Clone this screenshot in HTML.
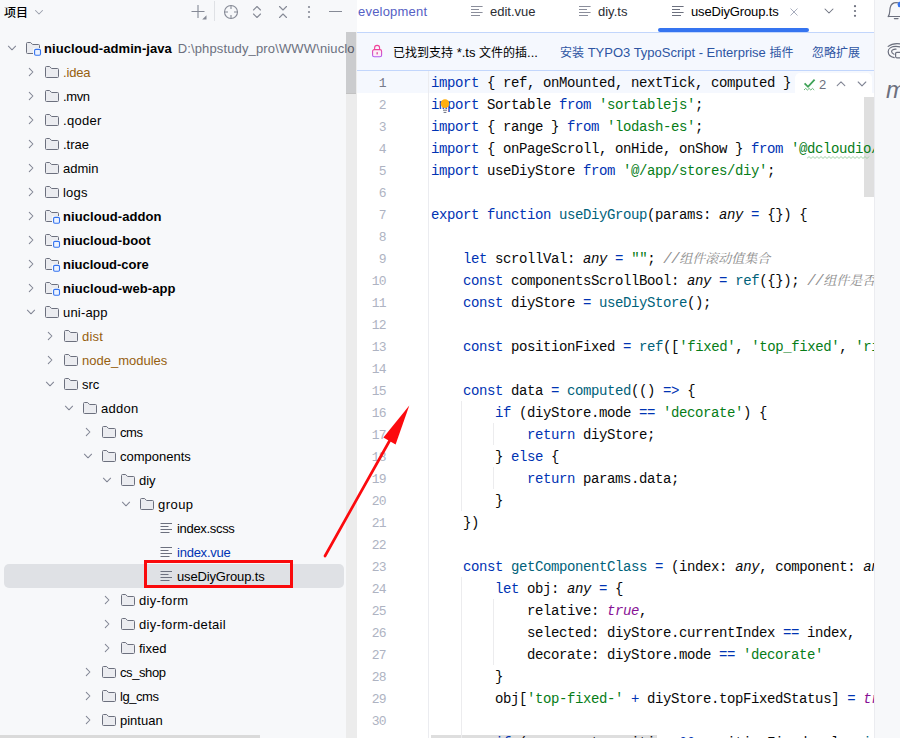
<!DOCTYPE html>
<html lang="zh">
<head>
<meta charset="utf-8">
<title>useDiyGroup.ts</title>
<style>
html,body{margin:0;padding:0;}
body{width:900px;height:738px;overflow:hidden;position:relative;background:#fff;font-family:"Liberation Sans","Noto Sans CJK SC",sans-serif;font-size:13px;color:#000;}
#left{position:absolute;left:0;top:0;width:357px;height:738px;background:#f7f8fa;overflow:hidden;}
#left .ic{position:absolute;}
#left .t{position:absolute;height:24px;line-height:24px;white-space:nowrap;font-size:13px;color:#000;}
#left .t.b{font-weight:bold;letter-spacing:0.08px;}
#left .t.ex{color:#96600f;}
#left .t.bl{color:#0033b3;}
#left .path{font-weight:normal;color:#6c707e;margin-left:2px;letter-spacing:0.14px;}
#sel{position:absolute;left:4px;top:564px;width:340px;height:24px;border-radius:5px;background:#dfe1e5;}
#vsb{position:absolute;left:346px;top:93px;width:11px;height:645px;background:#ececec;}
#vsb i{position:absolute;left:0;top:-61px;width:10px;height:61.6px;background:rgba(0,0,0,0.175);display:block;}
#vsb b{position:absolute;left:10px;top:-61px;width:1px;height:61px;background:#ececec;display:block;}
#hsb{position:absolute;left:0;top:735px;width:346px;height:3px;background:transparent;}
#hsb i{position:absolute;left:0;top:0;width:260px;height:3px;background:#dadada;display:block;}
#redbox{position:absolute;left:144px;top:560px;width:143px;height:22px;border:3px solid #fa0a0c;}
#editor{position:absolute;left:357px;top:0;width:518px;height:738px;background:#fff;overflow:hidden;}
#right{position:absolute;left:874px;top:0;width:26px;height:738px;background:#f7f8fa;border-left:1px solid #ebecf0;box-sizing:border-box;overflow:hidden;}
.abs{position:absolute;}
#banner{position:absolute;left:0;top:32px;width:518px;height:38px;background:#f5f8fe;border-top:1px solid #c2d6fc;border-bottom:1px solid #c2d6fc;box-sizing:content-box;height:37px;}
#code{position:absolute;left:0;top:0;width:518px;height:738px;overflow:hidden;font-family:"Liberation Mono","Noto Sans CJK SC",monospace;font-size:14px;letter-spacing:-0.4px;}
.cl{position:absolute;left:74px;margin-top:1px;height:22px;line-height:22px;white-space:pre;color:#080808;}
.ln{position:absolute;left:0;width:28.6px;text-align:right;height:22px;line-height:22px;color:#aeb3c2;font-size:13px;letter-spacing:-0.9px;margin-top:2px;}
.ln.cur{color:#767a8a;}
.k{color:#0033b3;}
.s{color:#067d17;}
.f{color:#00627a;}
.o{color:#0033b3;}
.c{color:#8c8c8c;font-style:italic;}
.cc{color:#8c8c8c;font-style:italic;font-family:"Liberation Serif","Noto Serif CJK SC",serif;font-size:13px;letter-spacing:0;}
.i{font-style:italic;}
.p{color:#871094;font-style:italic;}
.cj{font-size:12px;}
.tab{position:absolute;top:0px;height:24px;line-height:24px;font-size:13px;white-space:nowrap;}
</style>
</head>
<body>
<div id="left">
  <div class="abs" style="left:4px;top:1px;height:24px;line-height:24px;font-size:12px;font-weight:500;">项目</div>
  <svg class="abs" style="left:31px;top:4px" width="16" height="16" viewBox="0 0 16 16"><path d="M4.5 6.5 L8 10 L11.5 6.5" fill="none" stroke="#9a9eaa" stroke-width="1.05" stroke-linecap="round" stroke-linejoin="round"/></svg>
  <!-- toolbar icons -->
  <svg class="abs" style="left:188px;top:2px" width="22" height="20" viewBox="0 0 22 20"><path d="M10 3 V16 M3.5 9.5 H16.5" fill="none" stroke="#868a96" stroke-width="1.1"/><path d="M18.5 13.2 V17.5 H14.2 Z" fill="#868a96"/></svg>
  <div class="abs" style="left:214px;top:1px;width:1px;height:20px;background:#dfe1e5"></div>
  <svg class="abs" style="left:223px;top:4px" width="16" height="16" viewBox="0 0 16 16"><circle cx="8" cy="8" r="6.5" fill="none" stroke="#868a96" stroke-width="1.1"/><path d="M8 1.5 V5 M8 11 V14.5 M1.5 8 H5 M11 8 H14.5" stroke="#868a96" stroke-width="1.1" fill="none"/></svg>
  <svg class="abs" style="left:249px;top:4px" width="16" height="16" viewBox="0 0 16 16"><path d="M4.5 6 L8 2.5 L11.5 6 M4.5 10 L8 13.5 L11.5 10" fill="none" stroke="#868a96" stroke-width="1.1" stroke-linecap="round" stroke-linejoin="round"/></svg>
  <svg class="abs" style="left:275px;top:4px" width="16" height="16" viewBox="0 0 16 16"><path d="M4.5 2.5 L8 6 L11.5 2.5 M4.5 13.5 L8 10 L11.5 13.5" fill="none" stroke="#868a96" stroke-width="1.1" stroke-linecap="round" stroke-linejoin="round"/></svg>
  <svg class="abs" style="left:301px;top:4px" width="16" height="16" viewBox="0 0 16 16"><circle cx="8" cy="3" r="1.1" fill="#868a96"/><circle cx="8" cy="8" r="1.1" fill="#868a96"/><circle cx="8" cy="13" r="1.1" fill="#868a96"/></svg>
  <div class="abs" style="left:329px;top:11px;width:13px;height:1px;background:#868a96"></div>
  <div id="sel"></div>
<svg class="ic" style="left:4px;top:40px" width="16" height="16" viewBox="0 0 16 16"><path d="M4.4 6.2 L8 9.8 L11.6 6.2" fill="none" stroke="#818594" stroke-width="1.05" stroke-linecap="round" stroke-linejoin="round"/></svg>
<svg class="ic" style="left:25px;top:40px;overflow:visible" width="16" height="16" viewBox="0 0 16 16"><path d="M1.5 3.5 a1 1 0 0 1 1-1 H5.6 L7.6 4.5 H13.5 a1 1 0 0 1 1 1 V12.5 a1 1 0 0 1-1 1 H2.5 a1 1 0 0 1-1-1 Z" fill="#ebecf0" stroke="#6c707e" stroke-width="1"/><rect x="8" y="8" width="9" height="9" fill="#f7f8fa"/><rect x="9.6" y="9.4" width="5.9" height="5.9" rx="1.2" fill="#edf3ff" stroke="#3574f0" stroke-width="1.1"/></svg>
<div class="t b" style="left:44px;top:37px">niucloud-admin-java<span class="path"> D:\phpstudy_pro\WWW\niuclo</span></div>
<svg class="ic" style="left:23px;top:64px" width="16" height="16" viewBox="0 0 16 16"><path d="M6.3 4.4 L9.9 8 L6.3 11.6" fill="none" stroke="#818594" stroke-width="1.05" stroke-linecap="round" stroke-linejoin="round"/></svg>
<svg class="ic" style="left:44px;top:64px" width="16" height="16" viewBox="0 0 16 16"><path d="M1.5 3.5 a1 1 0 0 1 1-1 H5.6 L7.6 4.5 H13.5 a1 1 0 0 1 1 1 V12.5 a1 1 0 0 1-1 1 H2.5 a1 1 0 0 1-1-1 Z" fill="#ebecf0" stroke="#6c707e" stroke-width="1"/></svg>
<div class="t ex" style="left:63px;top:61px;letter-spacing:-0.18px">.idea</div>
<svg class="ic" style="left:23px;top:88px" width="16" height="16" viewBox="0 0 16 16"><path d="M6.3 4.4 L9.9 8 L6.3 11.6" fill="none" stroke="#818594" stroke-width="1.05" stroke-linecap="round" stroke-linejoin="round"/></svg>
<svg class="ic" style="left:44px;top:88px" width="16" height="16" viewBox="0 0 16 16"><path d="M1.5 3.5 a1 1 0 0 1 1-1 H5.6 L7.6 4.5 H13.5 a1 1 0 0 1 1 1 V12.5 a1 1 0 0 1-1 1 H2.5 a1 1 0 0 1-1-1 Z" fill="#ebecf0" stroke="#6c707e" stroke-width="1"/></svg>
<div class="t" style="left:63px;top:85px;letter-spacing:-0.37px">.mvn</div>
<svg class="ic" style="left:23px;top:112px" width="16" height="16" viewBox="0 0 16 16"><path d="M6.3 4.4 L9.9 8 L6.3 11.6" fill="none" stroke="#818594" stroke-width="1.05" stroke-linecap="round" stroke-linejoin="round"/></svg>
<svg class="ic" style="left:44px;top:112px" width="16" height="16" viewBox="0 0 16 16"><path d="M1.5 3.5 a1 1 0 0 1 1-1 H5.6 L7.6 4.5 H13.5 a1 1 0 0 1 1 1 V12.5 a1 1 0 0 1-1 1 H2.5 a1 1 0 0 1-1-1 Z" fill="#ebecf0" stroke="#6c707e" stroke-width="1"/></svg>
<div class="t" style="left:63px;top:109px;letter-spacing:0.30px">.qoder</div>
<svg class="ic" style="left:23px;top:136px" width="16" height="16" viewBox="0 0 16 16"><path d="M6.3 4.4 L9.9 8 L6.3 11.6" fill="none" stroke="#818594" stroke-width="1.05" stroke-linecap="round" stroke-linejoin="round"/></svg>
<svg class="ic" style="left:44px;top:136px" width="16" height="16" viewBox="0 0 16 16"><path d="M1.5 3.5 a1 1 0 0 1 1-1 H5.6 L7.6 4.5 H13.5 a1 1 0 0 1 1 1 V12.5 a1 1 0 0 1-1 1 H2.5 a1 1 0 0 1-1-1 Z" fill="#ebecf0" stroke="#6c707e" stroke-width="1"/></svg>
<div class="t" style="left:63px;top:133px">.trae</div>
<svg class="ic" style="left:23px;top:160px" width="16" height="16" viewBox="0 0 16 16"><path d="M6.3 4.4 L9.9 8 L6.3 11.6" fill="none" stroke="#818594" stroke-width="1.05" stroke-linecap="round" stroke-linejoin="round"/></svg>
<svg class="ic" style="left:44px;top:160px" width="16" height="16" viewBox="0 0 16 16"><path d="M1.5 3.5 a1 1 0 0 1 1-1 H5.6 L7.6 4.5 H13.5 a1 1 0 0 1 1 1 V12.5 a1 1 0 0 1-1 1 H2.5 a1 1 0 0 1-1-1 Z" fill="#ebecf0" stroke="#6c707e" stroke-width="1"/></svg>
<div class="t" style="left:63px;top:157px">admin</div>
<svg class="ic" style="left:23px;top:184px" width="16" height="16" viewBox="0 0 16 16"><path d="M6.3 4.4 L9.9 8 L6.3 11.6" fill="none" stroke="#818594" stroke-width="1.05" stroke-linecap="round" stroke-linejoin="round"/></svg>
<svg class="ic" style="left:44px;top:184px" width="16" height="16" viewBox="0 0 16 16"><path d="M1.5 3.5 a1 1 0 0 1 1-1 H5.6 L7.6 4.5 H13.5 a1 1 0 0 1 1 1 V12.5 a1 1 0 0 1-1 1 H2.5 a1 1 0 0 1-1-1 Z" fill="#ebecf0" stroke="#6c707e" stroke-width="1"/></svg>
<div class="t" style="left:63px;top:181px;letter-spacing:0.20px">logs</div>
<svg class="ic" style="left:23px;top:208px" width="16" height="16" viewBox="0 0 16 16"><path d="M6.3 4.4 L9.9 8 L6.3 11.6" fill="none" stroke="#818594" stroke-width="1.05" stroke-linecap="round" stroke-linejoin="round"/></svg>
<svg class="ic" style="left:44px;top:208px;overflow:visible" width="16" height="16" viewBox="0 0 16 16"><path d="M1.5 3.5 a1 1 0 0 1 1-1 H5.6 L7.6 4.5 H13.5 a1 1 0 0 1 1 1 V12.5 a1 1 0 0 1-1 1 H2.5 a1 1 0 0 1-1-1 Z" fill="#ebecf0" stroke="#6c707e" stroke-width="1"/><rect x="8" y="8" width="9" height="9" fill="#f7f8fa"/><rect x="9.6" y="9.4" width="5.9" height="5.9" rx="1.2" fill="#edf3ff" stroke="#3574f0" stroke-width="1.1"/></svg>
<div class="t b" style="left:63px;top:205px">niucloud-addon</div>
<svg class="ic" style="left:23px;top:232px" width="16" height="16" viewBox="0 0 16 16"><path d="M6.3 4.4 L9.9 8 L6.3 11.6" fill="none" stroke="#818594" stroke-width="1.05" stroke-linecap="round" stroke-linejoin="round"/></svg>
<svg class="ic" style="left:44px;top:232px;overflow:visible" width="16" height="16" viewBox="0 0 16 16"><path d="M1.5 3.5 a1 1 0 0 1 1-1 H5.6 L7.6 4.5 H13.5 a1 1 0 0 1 1 1 V12.5 a1 1 0 0 1-1 1 H2.5 a1 1 0 0 1-1-1 Z" fill="#ebecf0" stroke="#6c707e" stroke-width="1"/><rect x="8" y="8" width="9" height="9" fill="#f7f8fa"/><rect x="9.6" y="9.4" width="5.9" height="5.9" rx="1.2" fill="#edf3ff" stroke="#3574f0" stroke-width="1.1"/></svg>
<div class="t b" style="left:63px;top:229px">niucloud-boot</div>
<svg class="ic" style="left:23px;top:256px" width="16" height="16" viewBox="0 0 16 16"><path d="M6.3 4.4 L9.9 8 L6.3 11.6" fill="none" stroke="#818594" stroke-width="1.05" stroke-linecap="round" stroke-linejoin="round"/></svg>
<svg class="ic" style="left:44px;top:256px;overflow:visible" width="16" height="16" viewBox="0 0 16 16"><path d="M1.5 3.5 a1 1 0 0 1 1-1 H5.6 L7.6 4.5 H13.5 a1 1 0 0 1 1 1 V12.5 a1 1 0 0 1-1 1 H2.5 a1 1 0 0 1-1-1 Z" fill="#ebecf0" stroke="#6c707e" stroke-width="1"/><rect x="8" y="8" width="9" height="9" fill="#f7f8fa"/><rect x="9.6" y="9.4" width="5.9" height="5.9" rx="1.2" fill="#edf3ff" stroke="#3574f0" stroke-width="1.1"/></svg>
<div class="t b" style="left:63px;top:253px;letter-spacing:-0.02px">niucloud-core</div>
<svg class="ic" style="left:23px;top:280px" width="16" height="16" viewBox="0 0 16 16"><path d="M6.3 4.4 L9.9 8 L6.3 11.6" fill="none" stroke="#818594" stroke-width="1.05" stroke-linecap="round" stroke-linejoin="round"/></svg>
<svg class="ic" style="left:44px;top:280px;overflow:visible" width="16" height="16" viewBox="0 0 16 16"><path d="M1.5 3.5 a1 1 0 0 1 1-1 H5.6 L7.6 4.5 H13.5 a1 1 0 0 1 1 1 V12.5 a1 1 0 0 1-1 1 H2.5 a1 1 0 0 1-1-1 Z" fill="#ebecf0" stroke="#6c707e" stroke-width="1"/><rect x="8" y="8" width="9" height="9" fill="#f7f8fa"/><rect x="9.6" y="9.4" width="5.9" height="5.9" rx="1.2" fill="#edf3ff" stroke="#3574f0" stroke-width="1.1"/></svg>
<div class="t b" style="left:63px;top:277px">niucloud-web-app</div>
<svg class="ic" style="left:23px;top:304px" width="16" height="16" viewBox="0 0 16 16"><path d="M4.4 6.2 L8 9.8 L11.6 6.2" fill="none" stroke="#818594" stroke-width="1.05" stroke-linecap="round" stroke-linejoin="round"/></svg>
<svg class="ic" style="left:44px;top:304px" width="16" height="16" viewBox="0 0 16 16"><path d="M1.5 3.5 a1 1 0 0 1 1-1 H5.6 L7.6 4.5 H13.5 a1 1 0 0 1 1 1 V12.5 a1 1 0 0 1-1 1 H2.5 a1 1 0 0 1-1-1 Z" fill="#ebecf0" stroke="#6c707e" stroke-width="1"/></svg>
<div class="t" style="left:63px;top:301px;letter-spacing:0.19px">uni-app</div>
<svg class="ic" style="left:42px;top:328px" width="16" height="16" viewBox="0 0 16 16"><path d="M6.3 4.4 L9.9 8 L6.3 11.6" fill="none" stroke="#818594" stroke-width="1.05" stroke-linecap="round" stroke-linejoin="round"/></svg>
<svg class="ic" style="left:63px;top:328px" width="16" height="16" viewBox="0 0 16 16"><path d="M1.5 3.5 a1 1 0 0 1 1-1 H5.6 L7.6 4.5 H13.5 a1 1 0 0 1 1 1 V12.5 a1 1 0 0 1-1 1 H2.5 a1 1 0 0 1-1-1 Z" fill="#ebecf0" stroke="#6c707e" stroke-width="1"/></svg>
<div class="t ex" style="left:82px;top:325px;letter-spacing:0.20px">dist</div>
<svg class="ic" style="left:42px;top:352px" width="16" height="16" viewBox="0 0 16 16"><path d="M6.3 4.4 L9.9 8 L6.3 11.6" fill="none" stroke="#818594" stroke-width="1.05" stroke-linecap="round" stroke-linejoin="round"/></svg>
<svg class="ic" style="left:63px;top:352px" width="16" height="16" viewBox="0 0 16 16"><path d="M1.5 3.5 a1 1 0 0 1 1-1 H5.6 L7.6 4.5 H13.5 a1 1 0 0 1 1 1 V12.5 a1 1 0 0 1-1 1 H2.5 a1 1 0 0 1-1-1 Z" fill="#ebecf0" stroke="#6c707e" stroke-width="1"/></svg>
<div class="t ex" style="left:82px;top:349px">node_modules</div>
<svg class="ic" style="left:42px;top:376px" width="16" height="16" viewBox="0 0 16 16"><path d="M4.4 6.2 L8 9.8 L11.6 6.2" fill="none" stroke="#818594" stroke-width="1.05" stroke-linecap="round" stroke-linejoin="round"/></svg>
<svg class="ic" style="left:63px;top:376px" width="16" height="16" viewBox="0 0 16 16"><path d="M1.5 3.5 a1 1 0 0 1 1-1 H5.6 L7.6 4.5 H13.5 a1 1 0 0 1 1 1 V12.5 a1 1 0 0 1-1 1 H2.5 a1 1 0 0 1-1-1 Z" fill="#ebecf0" stroke="#6c707e" stroke-width="1"/></svg>
<div class="t" style="left:82px;top:373px">src</div>
<svg class="ic" style="left:61px;top:400px" width="16" height="16" viewBox="0 0 16 16"><path d="M4.4 6.2 L8 9.8 L11.6 6.2" fill="none" stroke="#818594" stroke-width="1.05" stroke-linecap="round" stroke-linejoin="round"/></svg>
<svg class="ic" style="left:82px;top:400px" width="16" height="16" viewBox="0 0 16 16"><path d="M1.5 3.5 a1 1 0 0 1 1-1 H5.6 L7.6 4.5 H13.5 a1 1 0 0 1 1 1 V12.5 a1 1 0 0 1-1 1 H2.5 a1 1 0 0 1-1-1 Z" fill="#ebecf0" stroke="#6c707e" stroke-width="1"/></svg>
<div class="t" style="left:101px;top:397px;letter-spacing:0.25px">addon</div>
<svg class="ic" style="left:80px;top:424px" width="16" height="16" viewBox="0 0 16 16"><path d="M6.3 4.4 L9.9 8 L6.3 11.6" fill="none" stroke="#818594" stroke-width="1.05" stroke-linecap="round" stroke-linejoin="round"/></svg>
<svg class="ic" style="left:101px;top:424px" width="16" height="16" viewBox="0 0 16 16"><path d="M1.5 3.5 a1 1 0 0 1 1-1 H5.6 L7.6 4.5 H13.5 a1 1 0 0 1 1 1 V12.5 a1 1 0 0 1-1 1 H2.5 a1 1 0 0 1-1-1 Z" fill="#ebecf0" stroke="#6c707e" stroke-width="1"/></svg>
<div class="t" style="left:120px;top:421px;letter-spacing:-0.40px">cms</div>
<svg class="ic" style="left:80px;top:448px" width="16" height="16" viewBox="0 0 16 16"><path d="M4.4 6.2 L8 9.8 L11.6 6.2" fill="none" stroke="#818594" stroke-width="1.05" stroke-linecap="round" stroke-linejoin="round"/></svg>
<svg class="ic" style="left:101px;top:448px" width="16" height="16" viewBox="0 0 16 16"><path d="M1.5 3.5 a1 1 0 0 1 1-1 H5.6 L7.6 4.5 H13.5 a1 1 0 0 1 1 1 V12.5 a1 1 0 0 1-1 1 H2.5 a1 1 0 0 1-1-1 Z" fill="#ebecf0" stroke="#6c707e" stroke-width="1"/></svg>
<div class="t" style="left:120px;top:445px">components</div>
<svg class="ic" style="left:99px;top:472px" width="16" height="16" viewBox="0 0 16 16"><path d="M4.4 6.2 L8 9.8 L11.6 6.2" fill="none" stroke="#818594" stroke-width="1.05" stroke-linecap="round" stroke-linejoin="round"/></svg>
<svg class="ic" style="left:120px;top:472px" width="16" height="16" viewBox="0 0 16 16"><path d="M1.5 3.5 a1 1 0 0 1 1-1 H5.6 L7.6 4.5 H13.5 a1 1 0 0 1 1 1 V12.5 a1 1 0 0 1-1 1 H2.5 a1 1 0 0 1-1-1 Z" fill="#ebecf0" stroke="#6c707e" stroke-width="1"/></svg>
<div class="t" style="left:139px;top:469px">diy</div>
<svg class="ic" style="left:118px;top:496px" width="16" height="16" viewBox="0 0 16 16"><path d="M4.4 6.2 L8 9.8 L11.6 6.2" fill="none" stroke="#818594" stroke-width="1.05" stroke-linecap="round" stroke-linejoin="round"/></svg>
<svg class="ic" style="left:139px;top:496px" width="16" height="16" viewBox="0 0 16 16"><path d="M1.5 3.5 a1 1 0 0 1 1-1 H5.6 L7.6 4.5 H13.5 a1 1 0 0 1 1 1 V12.5 a1 1 0 0 1-1 1 H2.5 a1 1 0 0 1-1-1 Z" fill="#ebecf0" stroke="#6c707e" stroke-width="1"/></svg>
<div class="t" style="left:158px;top:493px;letter-spacing:0.45px">group</div>
<svg class="ic" style="left:159px;top:520px" width="16" height="16" viewBox="0 0 16 16"><path d="M1.5 3.5 H13 M1.5 6.5 H9.5 M1.5 9.5 H13 M1.5 12.5 H10.5" fill="none" stroke="#6c707e" stroke-width="1"/></svg>
<div class="t" style="left:177px;top:517px;letter-spacing:-0.32px">index.scss</div>
<svg class="ic" style="left:159px;top:544px" width="16" height="16" viewBox="0 0 16 16"><path d="M1.5 3.5 H13 M1.5 6.5 H9.5 M1.5 9.5 H13 M1.5 12.5 H10.5" fill="none" stroke="#6c707e" stroke-width="1"/></svg>
<div class="t bl" style="left:177px;top:541px;letter-spacing:-0.24px">index.vue</div>
<svg class="ic" style="left:159px;top:568px" width="16" height="16" viewBox="0 0 16 16"><path d="M1.5 3.5 H13 M1.5 6.5 H9.5 M1.5 9.5 H13 M1.5 12.5 H10.5" fill="none" stroke="#6c707e" stroke-width="1"/></svg>
<div class="t" style="left:177px;top:565px;letter-spacing:-0.15px">useDiyGroup.ts</div>
<svg class="ic" style="left:99px;top:592px" width="16" height="16" viewBox="0 0 16 16"><path d="M6.3 4.4 L9.9 8 L6.3 11.6" fill="none" stroke="#818594" stroke-width="1.05" stroke-linecap="round" stroke-linejoin="round"/></svg>
<svg class="ic" style="left:120px;top:592px" width="16" height="16" viewBox="0 0 16 16"><path d="M1.5 3.5 a1 1 0 0 1 1-1 H5.6 L7.6 4.5 H13.5 a1 1 0 0 1 1 1 V12.5 a1 1 0 0 1-1 1 H2.5 a1 1 0 0 1-1-1 Z" fill="#ebecf0" stroke="#6c707e" stroke-width="1"/></svg>
<div class="t" style="left:139px;top:589px;letter-spacing:0.31px">diy-form</div>
<svg class="ic" style="left:99px;top:616px" width="16" height="16" viewBox="0 0 16 16"><path d="M6.3 4.4 L9.9 8 L6.3 11.6" fill="none" stroke="#818594" stroke-width="1.05" stroke-linecap="round" stroke-linejoin="round"/></svg>
<svg class="ic" style="left:120px;top:616px" width="16" height="16" viewBox="0 0 16 16"><path d="M1.5 3.5 a1 1 0 0 1 1-1 H5.6 L7.6 4.5 H13.5 a1 1 0 0 1 1 1 V12.5 a1 1 0 0 1-1 1 H2.5 a1 1 0 0 1-1-1 Z" fill="#ebecf0" stroke="#6c707e" stroke-width="1"/></svg>
<div class="t" style="left:139px;top:613px;letter-spacing:0.31px">diy-form-detail</div>
<svg class="ic" style="left:99px;top:640px" width="16" height="16" viewBox="0 0 16 16"><path d="M6.3 4.4 L9.9 8 L6.3 11.6" fill="none" stroke="#818594" stroke-width="1.05" stroke-linecap="round" stroke-linejoin="round"/></svg>
<svg class="ic" style="left:120px;top:640px" width="16" height="16" viewBox="0 0 16 16"><path d="M1.5 3.5 a1 1 0 0 1 1-1 H5.6 L7.6 4.5 H13.5 a1 1 0 0 1 1 1 V12.5 a1 1 0 0 1-1 1 H2.5 a1 1 0 0 1-1-1 Z" fill="#ebecf0" stroke="#6c707e" stroke-width="1"/></svg>
<div class="t" style="left:139px;top:637px">fixed</div>
<svg class="ic" style="left:80px;top:664px" width="16" height="16" viewBox="0 0 16 16"><path d="M6.3 4.4 L9.9 8 L6.3 11.6" fill="none" stroke="#818594" stroke-width="1.05" stroke-linecap="round" stroke-linejoin="round"/></svg>
<svg class="ic" style="left:101px;top:664px" width="16" height="16" viewBox="0 0 16 16"><path d="M1.5 3.5 a1 1 0 0 1 1-1 H5.6 L7.6 4.5 H13.5 a1 1 0 0 1 1 1 V12.5 a1 1 0 0 1-1 1 H2.5 a1 1 0 0 1-1-1 Z" fill="#ebecf0" stroke="#6c707e" stroke-width="1"/></svg>
<div class="t" style="left:120px;top:661px;letter-spacing:-0.41px">cs_shop</div>
<svg class="ic" style="left:80px;top:688px" width="16" height="16" viewBox="0 0 16 16"><path d="M6.3 4.4 L9.9 8 L6.3 11.6" fill="none" stroke="#818594" stroke-width="1.05" stroke-linecap="round" stroke-linejoin="round"/></svg>
<svg class="ic" style="left:101px;top:688px" width="16" height="16" viewBox="0 0 16 16"><path d="M1.5 3.5 a1 1 0 0 1 1-1 H5.6 L7.6 4.5 H13.5 a1 1 0 0 1 1 1 V12.5 a1 1 0 0 1-1 1 H2.5 a1 1 0 0 1-1-1 Z" fill="#ebecf0" stroke="#6c707e" stroke-width="1"/></svg>
<div class="t" style="left:120px;top:685px;letter-spacing:-0.45px">lg_cms</div>
<svg class="ic" style="left:80px;top:712px" width="16" height="16" viewBox="0 0 16 16"><path d="M6.3 4.4 L9.9 8 L6.3 11.6" fill="none" stroke="#818594" stroke-width="1.05" stroke-linecap="round" stroke-linejoin="round"/></svg>
<svg class="ic" style="left:101px;top:712px" width="16" height="16" viewBox="0 0 16 16"><path d="M1.5 3.5 a1 1 0 0 1 1-1 H5.6 L7.6 4.5 H13.5 a1 1 0 0 1 1 1 V12.5 a1 1 0 0 1-1 1 H2.5 a1 1 0 0 1-1-1 Z" fill="#ebecf0" stroke="#6c707e" stroke-width="1"/></svg>
<div class="t" style="left:120px;top:709px">pintuan</div>
  <div id="vsb"><i></i><b></b></div>
  <div id="hsb"><i></i></div>
  <div id="redbox"></div>
</div>
<div id="editor">
  <div class="abs" style="left:507px;top:97px;width:10px;height:100px;background:#dfdfdf"></div>
  <div class="abs" style="left:74px;top:735px;width:226px;height:3px;background:#dedede"></div>
  <div id="code">
  <div class="abs" style="left:0;top:71px;width:518px;height:22px;background:#f5f8fe"></div>
<div class="ln cur" style="top:71px">1</div>
<div class="ln" style="top:93px">2</div>
<div class="ln" style="top:115px">3</div>
<div class="ln" style="top:137px">4</div>
<div class="ln" style="top:159px">5</div>
<div class="ln" style="top:181px">6</div>
<div class="ln" style="top:203px">7</div>
<div class="ln" style="top:225px">8</div>
<div class="ln" style="top:247px">9</div>
<div class="ln" style="top:269px">10</div>
<div class="ln" style="top:291px">11</div>
<div class="ln" style="top:313px">12</div>
<div class="ln" style="top:335px">13</div>
<div class="ln" style="top:357px">14</div>
<div class="ln" style="top:379px">15</div>
<div class="ln" style="top:401px">16</div>
<div class="ln" style="top:423px">17</div>
<div class="ln" style="top:445px">18</div>
<div class="ln" style="top:467px">19</div>
<div class="ln" style="top:489px">20</div>
<div class="ln" style="top:511px">21</div>
<div class="ln" style="top:533px">22</div>
<div class="ln" style="top:555px">23</div>
<div class="ln" style="top:577px">24</div>
<div class="ln" style="top:599px">25</div>
<div class="ln" style="top:621px">26</div>
<div class="ln" style="top:643px">27</div>
<div class="ln" style="top:665px">28</div>
<div class="ln" style="top:687px">29</div>
<div class="ln" style="top:709px">30</div>
<div class="cl" style="top:71px"><span class="k">import</span> { ref, onMounted, nextTick, computed }</div>
<div class="cl" style="top:93px"><span class="k">import</span> Sortable <span class="k">from</span> <span class="s">&#x27;sortablejs&#x27;</span>;</div>
<div class="cl" style="top:115px"><span class="k">import</span> { range } <span class="k">from</span> <span class="s">&#x27;lodash-es&#x27;</span>;</div>
<div class="cl" style="top:137px"><span class="k">import</span> { onPageScroll, onHide, onShow } <span class="k">from</span> <span class="s">&#x27;@dcloudio/</span></div>
<div class="cl" style="top:159px"><span class="k">import</span> useDiyStore <span class="k">from</span> <span class="s">&#x27;@/app/stores/diy&#x27;</span>;</div>
<div class="cl" style="top:181px"></div>
<div class="cl" style="top:203px"><span class="k">export function</span> <span class="f">useDiyGroup</span>(params: <span class="i">any</span> <span class="o">=</span> {}) {</div>
<div class="cl" style="top:225px"></div>
<div class="cl" style="top:247px">    <span class="k">let</span> scrollVal: <span class="i">any</span> <span class="o">=</span> <span class="s">&quot;&quot;</span>; <span class="c">//</span><span class="cc">组件滚动值集合</span></div>
<div class="cl" style="top:269px">    <span class="k">const</span> componentsScrollBool: <span class="i">any</span> <span class="o">=</span> <span class="f">ref</span>({}); <span class="c">//</span><span class="cc">组件是否</span></div>
<div class="cl" style="top:291px">    <span class="k">const</span> diyStore <span class="o">=</span> <span class="f">useDiyStore</span>();</div>
<div class="cl" style="top:313px"></div>
<div class="cl" style="top:335px">    <span class="k">const</span> positionFixed <span class="o">=</span> <span class="f">ref</span>([<span class="s">&#x27;fixed&#x27;</span>, <span class="s">&#x27;top_fixed&#x27;</span>, <span class="s">&#x27;ri</span></div>
<div class="cl" style="top:357px"></div>
<div class="cl" style="top:379px">    <span class="k">const</span> data <span class="o">=</span> <span class="f">computed</span>(() <span class="o">=&gt;</span> {</div>
<div class="cl" style="top:401px">        <span class="k">if</span> (diyStore.mode <span class="o">==</span> <span class="s">&#x27;decorate&#x27;</span>) {</div>
<div class="cl" style="top:423px">            <span class="k">return</span> diyStore;</div>
<div class="cl" style="top:445px">        } <span class="k">else</span> {</div>
<div class="cl" style="top:467px">            <span class="k">return</span> params.data;</div>
<div class="cl" style="top:489px">        }</div>
<div class="cl" style="top:511px">    })</div>
<div class="cl" style="top:533px"></div>
<div class="cl" style="top:555px">    <span class="k">const</span> <span class="f">getComponentClass</span> <span class="o">=</span> (index: <span class="i">any</span>, component: <span class="i">an</span></div>
<div class="cl" style="top:577px">        <span class="k">let</span> obj: <span class="i">any</span> <span class="o">=</span> {</div>
<div class="cl" style="top:599px">            relative: <span class="p">true</span>,</div>
<div class="cl" style="top:621px">            selected: diyStore.currentIndex <span class="o">==</span> index,</div>
<div class="cl" style="top:643px">            decorate: diyStore.mode <span class="o">==</span> <span class="s">&#x27;decorate&#x27;</span></div>
<div class="cl" style="top:665px">        }</div>
<div class="cl" style="top:687px">        obj[<span class="s">&#x27;top-fixed-&#x27;</span> <span class="o">+</span> diyStore.topFixedStatus] <span class="o">=</span> <span class="p">tr</span></div>
<div class="cl" style="top:709px"></div>
<div class="cl" style="top:731px">        <span class="k">if</span> (component.position <span class="o">&amp;&amp;</span> positionFixed.value.<span class="f">ind</span></div>
  </div>
  <!-- gutter line + indent guides -->
  <div class="abs" style="left:71px;top:71px;width:1px;height:667px;background:#ebecf0"></div>
  <div class="abs" style="left:104px;top:401px;width:1px;height:110px;background:#ececee"></div>
  <div class="abs" style="left:136px;top:423px;width:1px;height:22px;background:#ececee"></div>
  <div class="abs" style="left:136px;top:467px;width:1px;height:22px;background:#ececee"></div>
  <div class="abs" style="left:104px;top:577px;width:1px;height:161px;background:#ececee"></div>
  <div class="abs" style="left:136px;top:599px;width:1px;height:66px;background:#ececee"></div>
  <!-- squiggle under @dcloudio -->
  <svg class="abs" style="left:450px;top:154.5px" width="64" height="5" viewBox="0 0 64 5"><path d="M0 3.5 l2 -2 l2 2 l2 -2 l2 2 l2 -2 l2 2 l2 -2 l2 2 l2 -2 l2 2 l2 -2 l2 2 l2 -2 l2 2 l2 -2 l2 2 l2 -2 l2 2 l2 -2 l2 2 l2 -2 l2 2 l2 -2 l2 2 l2 -2 l2 2 l2 -2 l2 2 l2 -2 l2 2 l2 -2" fill="none" stroke="#9fd0a5" stroke-width="1"/></svg>
  <!-- light bulb -->
  <svg class="abs" style="left:82px;top:97px" width="12" height="18" viewBox="0 0 12 18"><circle cx="6" cy="6.6" r="4.3" fill="#ffaf0f"/><path d="M4 13.2 H8 M4.6 15.4 H7.4" stroke="#6c707e" stroke-width="1"/></svg>
  <!-- editor scrollbars -->
  
  <!-- inspection widget -->
  <div class="abs" style="left:438px;top:73px;width:77px;height:20px;background:#fff;border-radius:5px 5px 0 0"></div>
  <svg class="abs" style="left:446px;top:77px" width="14" height="16" viewBox="0 0 14 16"><path d="M1.6 6.4 L5 9.8 L11.6 2.6" fill="none" stroke="#3fa257" stroke-width="1.8"/><path d="M1 13 l1.7 -1.6 l1.7 1.6 l1.7 -1.6 l1.7 1.6 l1.7 -1.6 l1.7 1.6" fill="none" stroke="#5aae6c" stroke-width="0.9"/></svg>
  <div class="abs" style="left:462px;top:75px;height:20px;line-height:20px;font-size:13px;color:#6c707e;">2</div>
  <svg class="abs" style="left:477px;top:77px" width="14" height="14" viewBox="0 0 14 14"><path d="M3.2 8.6 L7 4.8 L10.8 8.6" fill="none" stroke="#818594" stroke-width="1.1" stroke-linecap="round" stroke-linejoin="round"/></svg>
  <svg class="abs" style="left:498px;top:77px" width="14" height="14" viewBox="0 0 14 14"><path d="M3.2 5 L7 8.8 L10.8 5" fill="none" stroke="#818594" stroke-width="1.1" stroke-linecap="round" stroke-linejoin="round"/></svg>
  <!-- tabs -->
  <div class="abs" style="left:0;top:0;width:518px;height:32px;background:#fff"></div>
  <div class="tab" style="left:1px;color:#5560c4;letter-spacing:0.2px">evelopment</div>
  <svg class="abs" style="left:113px;top:4px" width="16" height="16" viewBox="0 0 16 16"><path d="M1 2.5 H12.6 M1 5.5 H9 M1 8.5 H12.6 M1 11.5 H10" fill="none" stroke="#8b8e9b" stroke-width="1"/></svg>
  <div class="tab" style="left:133px;color:#2b2d33;">edit.vue</div>
  <svg class="abs" style="left:221px;top:4px" width="16" height="16" viewBox="0 0 16 16"><path d="M1 2.5 H12.6 M1 5.5 H9 M1 8.5 H12.6 M1 11.5 H10" fill="none" stroke="#8b8e9b" stroke-width="1"/></svg>
  <div class="tab" style="left:241px;color:#2b2d33;">diy.ts</div>
  <svg class="abs" style="left:314px;top:4px" width="16" height="16" viewBox="0 0 16 16"><path d="M1 2.5 H12.6 M1 5.5 H9 M1 8.5 H12.6 M1 11.5 H10" fill="none" stroke="#6c707e" stroke-width="1"/></svg>
  <div class="tab" style="left:334px;color:#000;letter-spacing:-0.15px">useDiyGroup.ts</div>
  <svg class="abs" style="left:429px;top:4px" width="16" height="16" viewBox="0 0 16 16"><path d="M4.5 4.5 L11.5 11.5 M11.5 4.5 L4.5 11.5" fill="none" stroke="#a8adbd" stroke-width="1"/></svg>
  <svg class="abs" style="left:464px;top:3px" width="16" height="16" viewBox="0 0 16 16"><path d="M4 6 L8 10 L12 6" fill="none" stroke="#6c707e" stroke-width="1.05" stroke-linecap="round" stroke-linejoin="round"/></svg>
  <svg class="abs" style="left:490px;top:3px" width="16" height="16" viewBox="0 0 16 16"><circle cx="8" cy="3.2" r="1.1" fill="#6c707e"/><circle cx="8" cy="8" r="1.1" fill="#6c707e"/><circle cx="8" cy="12.8" r="1.1" fill="#6c707e"/></svg>
  <div class="abs" style="left:301px;top:28px;width:151px;height:4px;border-radius:2px;background:#3574f0"></div>
  <div id="banner">
    <svg class="abs" style="left:13px;top:10px" width="16" height="18" viewBox="0 0 16 18"><defs><linearGradient id="lg" x1="0" y1="0" x2="0" y2="1"><stop offset="0" stop-color="#f0439a"/><stop offset="1" stop-color="#b45af2"/></linearGradient></defs><rect x="2.6" y="6.6" width="9" height="7.2" rx="1.6" fill="#fdeef7" stroke="url(#lg)" stroke-width="1.1"/><path d="M4.6 6.6 V4.9 a2.5 2.5 0 0 1 5 0 V6.6" fill="none" stroke="#f0439a" stroke-width="1.1"/><rect x="6.5" y="9.2" width="1.3" height="2.2" fill="#e0449e"/></svg>
    <div class="abs" style="left:36px;top:1px;height:37px;line-height:37px;font-size:13px;white-space:nowrap;"><span class="cj">已找到支持</span> *.ts <span class="cj">文件的插</span>...</div>
    <div class="abs" style="left:203px;top:1px;height:37px;line-height:37px;font-size:13px;white-space:nowrap;color:#2e55a3;"><span class="cj">安装</span> TYPO3 TypoScript - Enterprise <span class="cj">插件</span></div>
    <div class="abs" style="left:455px;top:1px;height:37px;line-height:37px;font-size:13px;white-space:nowrap;color:#2e55a3;"><span class="cj">忽略扩展</span></div>
  </div>
</div>
<div id="right">
  <svg class="abs" style="left:10px;top:0" width="16" height="24" viewBox="0 0 16 24"><path d="M3.2 16.5 C5.2 14.5 4.4 11 5.2 7.6 C6 4.2 8.6 2.6 11.2 2.6 C13.8 2.6 16.4 4.2 17.2 7.6 M3.2 16.5 H17" fill="none" stroke="#6c707e" stroke-width="1.2" stroke-linecap="round" stroke-linejoin="round"/><path d="M9.4 18.6 H13" stroke="#6c707e" stroke-width="1.3" stroke-linecap="round"/><circle cx="15.6" cy="4.4" r="3" fill="#3574f0"/></svg>
  <svg class="abs" style="left:10px;top:40px" width="16" height="22" viewBox="0 0 16 22"><g fill="none" stroke="#6c707e" stroke-width="1.2" stroke-linecap="round"><path d="M3.2 6.4 C5.6 4.4 9 3.6 12 3.6 C14 3.6 16 4 17 4.4"/><path d="M9.2 17.6 C5.6 17 3.2 14.6 3.2 11.6 C3.2 8.2 7 6.4 11 6.4 C13.6 6.4 16 7 17 7.6"/><path d="M9 14.2 C7.4 13.6 6.6 12.6 6.6 11.6 C6.6 10 8.6 9 11 9.2"/><rect x="10.6" y="12.4" width="8" height="5.4" rx="1.2"/></g></svg>
  <div class="abs" style="left:11px;top:75px;font-family:'Liberation Sans',sans-serif;font-style:italic;font-size:24px;line-height:30px;color:#6c707e;">m</div>
</div>
<svg class="abs" style="left:0;top:0;pointer-events:none" width="900" height="738" viewBox="0 0 900 738"><path d="M325 556 L390 440" stroke="#fc0a0e" stroke-width="2.7" stroke-linecap="round" fill="none"/><path d="M409.3 405.5 L395.6 444.6 L383.4 437.6 Z" fill="#fc0a0e"/></svg>
</body>
</html>
